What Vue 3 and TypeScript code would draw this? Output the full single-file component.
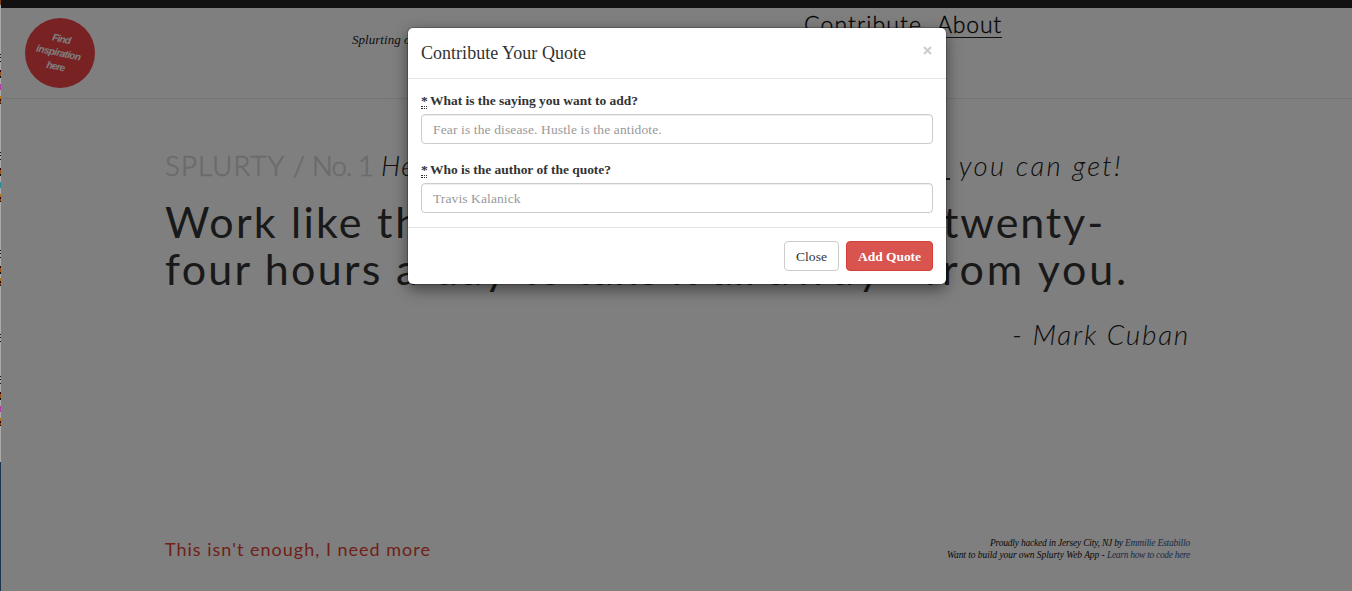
<script setup lang="ts">
import { ref } from 'vue'
import type { Directive } from 'vue'

interface Segment {
  text: string
  width: number
  linked?: boolean
}

/* Tracks a run of text out (or in) so that it spans the given width. */
const vFit: Directive<HTMLElement, number> = {
  mounted(el, { value }) {
    const natural = el.getBoundingClientRect().width
    const count = (el.textContent ?? '').length
    if (count > 0) el.style.letterSpacing = `${(value - natural) / count}px`
  },
}

const issue: Segment[] = [
  { text: 'SPLURTY ', width: 128 },
  { text: '/ ', width: 19 },
  { text: 'No. ', width: 46 },
  { text: '1 ', width: 23 },
]

const tagline: Segment[] = [
  { text: "Here's the daily dose of ", width: 300 },
  { text: 'startup advice', width: 269, linked: true },
  { text: ' you can get!', width: 173 },
]

const quoteLines: Segment[][] = [
  [
    { text: 'Work like ', width: 212 },
    { text: 'there is someone working ', width: 566 },
    { text: 'twenty-', width: 162 },
  ],
  [
    { text: 'four hours ', width: 231 },
    { text: 'a day ', width: 126 },
    { text: 'to take it all ', width: 246 },
    { text: 'away', width: 117 },
    { text: ' ', width: 39 },
    { text: 'from you.', width: 205 },
  ],
]

const fields = [
  { id: 'saying', label: 'What is the saying you want to add?', labelWidth: 208, hint: 'Fear is the disease. Hustle is the antidote.', spacing: 'hint-saying' },
  { id: 'author', label: 'Who is the author of the quote?', labelWidth: 181, hint: 'Travis Kalanick', spacing: 'hint-author' },
]
const values = ref<Record<string, string>>({ saying: '', author: '' })
</script>

<template>
  <div class="screen">
    <div class="page">
      <div class="topbar"></div>
      <header class="header">
        <div class="badge">
          <div class="badge-text">
            <div><span v-fit="20">Find</span></div>
            <div><span v-fit="46">inspiration</span></div>
            <div><span v-fit="20">here</span></div>
          </div>
        </div>
        <p class="slogan"><span v-fit="52">Splurting </span>one quote at a time</p>
        <nav class="nav">
          <a v-fit="118">Contribute</a>
          <a v-fit="65">About</a>
        </nav>
      </header>
      <main class="main">
        <p class="tagline">
          <span v-for="s in issue" :key="s.text" v-fit="s.width" class="issue">{{ s.text }}</span>
          <em v-for="s in tagline" :key="s.text" v-fit="s.width" :class="{ linked: s.linked }">{{ s.text }}</em>
        </p>
        <h1 class="quote">
          <span v-for="(line, i) in quoteLines" :key="i" class="quote-line">
            <span v-for="s in line" :key="s.text" v-fit="s.width">{{ s.text }}</span>
          </span>
        </h1>
        <p class="author"><em v-fit="178">- Mark Cuban</em></p>
      </main>
      <footer class="footer">
        <a v-fit="266" class="more">This isn't enough, I need more</a>
        <div class="credits">
          <div><span v-fit="135">Proudly hacked in Jersey City, NJ by </span><a v-fit="65">Emmilie Estabillo</a></div>
          <div><span v-fit="160">Want to build your own Splurty Web App - </span><a v-fit="83">Learn how to code here</a></div>
        </div>
      </footer>
    </div>
    <div class="backdrop"></div>
    <div class="edge"></div>
    <section class="modal" role="dialog">
      <div class="modal-header">
        <h4 v-fit="165">Contribute Your Quote</h4>
        <button class="dismiss" aria-label="Dismiss">
          <svg width="9" height="9" viewBox="0 0 9 9"><path d="M1 1L8 8M8 1L1 8" stroke="#ccc" stroke-width="2" /></svg>
        </button>
      </div>
      <div class="modal-body">
        <div v-for="f in fields" :key="f.id" class="group">
          <label :for="f.id"><abbr>*</abbr><span v-fit="f.labelWidth">{{ f.label }}</span></label>
          <input :id="f.id" v-model="values[f.id]" :class="f.spacing" :placeholder="f.hint" />
        </div>
      </div>
      <div class="modal-footer">
        <button class="btn close"><span v-fit="31">Close</span></button>
        <button class="btn add"><span v-fit="63">Add Quote</span></button>
      </div>
    </section>
  </div>
</template>

<style>
html, body { margin: 0; overflow: hidden; }
</style>

<style scoped>
* { box-sizing: border-box; }
p, h1, h4 { margin: 0; font-weight: 400; }
span, em, a, h4 { white-space: pre; }
.screen { position: relative; width: 1352px; height: 591px; overflow: hidden; font-family: "Liberation Serif", serif; color: #333; }
.page { height: 591px; background: #fff; display: flex; flex-direction: column; }
.topbar { height: 8px; background: #222; }
.header { height: 91px; border-bottom: 1px solid #e9e9e9; display: flex; align-items: flex-start; }
.badge { width: 70px; height: 70px; margin: 10px 0 0 25px; border-radius: 50%; background: #f24447; display: flex; align-items: center; justify-content: center; }
.badge-text { margin-right: 4px; transform: rotate(12deg); text-align: center; color: #fff; font: italic bold 10px/14px "Liberation Sans", sans-serif; }
.slogan { width: 450px; margin: 23px 0 0 257px; white-space: nowrap; overflow: hidden; font-size: 13px; line-height: 18px; font-style: italic; color: #222; }
.slogan span { display: inline-block; }
.nav { display: flex; gap: 15px; margin: 2px 0 0 2px; font: 300 23px/29px Lato, sans-serif; color: #000; -webkit-text-stroke: .3px #000; }
.nav a { border-bottom: 1px solid #222; height: 28px; }
.main { padding: 48px 162px 0 165px; height: 420px; font-family: Lato, sans-serif; }
.tagline { display: flex; height: 38px; font-size: 27.5px; line-height: 38px; font-weight: 300; color: #222; }
.issue { color: #d6d6d6; -webkit-text-stroke: .6px #d6d6d6; }
.linked { text-decoration: underline; }
.quote { margin-top: 13px; font-size: 43px; line-height: 47px; color: #333; }
.quote-line { display: flex; height: 47px; }
.author { margin-top: 23px; display: flex; justify-content: flex-end; font-size: 28px; line-height: 38px; font-weight: 300; color: #222; }
.footer { display: flex; justify-content: space-between; align-items: flex-start; padding: 17px 162px 0 165px; }
.more { font: 400 18px/26px Lato, sans-serif; color: #e23e31; }
.credits { margin-top: 1px; font-size: 9.5px; line-height: 12px; font-style: italic; color: #111; }
.credits div { display: flex; justify-content: flex-end; }
.credits a { color: #36558f; }
.backdrop { position: absolute; inset: 0; background: rgba(0, 0, 0, .5); }
.edge {
  position: absolute; left: 0; top: 0; width: 1px; height: 591px;
  background:
    linear-gradient(#80400f, #80400f) 0 0 / 1px 5px no-repeat,
    linear-gradient(#111 1px, #aaa 1px 3px, #111 3px 4px, #aaa 4px 7px, #111 7px) 0 54px / 1px 8px no-repeat,
    linear-gradient(#300 2px, #9a5215 2px 6px, #111 6px) 0 70px / 1px 8px no-repeat,
    linear-gradient(#b33cae, #b33cae) 0 84px / 1px 6px no-repeat,
    linear-gradient(#b27412 3px, #300 3px 5px, #8b4311 5px 7px, #111 7px) 0 96px / 1px 8px no-repeat,
    linear-gradient(#111 1px, #aaa 1px 3px, #111 3px 4px, #aaa 4px 7px, #111 7px) 0 152px / 1px 8px no-repeat,
    linear-gradient(#300 2px, #9a5215 2px 6px, #111 6px) 0 168px / 1px 8px no-repeat,
    linear-gradient(#238b99, #238b99) 0 182px / 1px 6px no-repeat,
    linear-gradient(#b27412 3px, #300 3px 5px, #8b4311 5px 7px, #111 7px) 0 194px / 1px 8px no-repeat,
    linear-gradient(#111 1px, #aaa 1px 3px, #111 3px 4px, #aaa 4px 7px, #111 7px) 0 250px / 1px 8px no-repeat,
    linear-gradient(#300 2px, #9a5215 2px 6px, #111 6px) 0 266px / 1px 8px no-repeat,
    linear-gradient(#b27412 3px, #300 3px 5px, #8b4311 5px 7px, #111 7px) 0 278px / 1px 8px no-repeat,
    linear-gradient(#111 1px, #aaa 1px 3px, #111 3px 4px, #aaa 4px 7px, #111 7px) 0 334px / 1px 8px no-repeat,
    linear-gradient(#111 1px, #aaa 1px 3px, #111 3px 4px, #aaa 4px 7px, #111 7px) 0 376px / 1px 8px no-repeat,
    linear-gradient(#300 2px, #9a5215 2px 6px, #111 6px) 0 392px / 1px 8px no-repeat,
    linear-gradient(#b33cae, #b33cae) 0 406px / 1px 6px no-repeat,
    linear-gradient(#b27412 3px, #300 3px 5px, #8b4311 5px 7px, #111 7px) 0 418px / 1px 8px no-repeat,
    linear-gradient(#1e3550, #1e3550) 0 462px / 1px 129px no-repeat,
    #aaa;
}
.modal { position: absolute; left: 408px; top: 28px; width: 538px; height: 256px; background: #fff; border-radius: 5px; box-shadow: 0 0 0 1px rgba(0, 0, 0, .2), 0 5px 15px rgba(0, 0, 0, .5); }
.modal-header { height: 51px; padding: 13px 13px 0; border-bottom: 1px solid #e5e5e5; display: flex; justify-content: space-between; align-items: flex-start; }
.modal-header h4 { font-size: 18px; line-height: 24px; color: #333; }
.dismiss { border: 0; background: none; padding: 0; margin: 5px 1px 0 0; height: 9px; display: flex; }
.modal-body { height: 148px; padding: 13px 13px 0; display: flex; flex-direction: column; gap: 17px; }
.group { display: flex; flex-direction: column; gap: 5px; }
label { display: flex; height: 17px; font-size: 13.5px; line-height: 17px; font-weight: 700; color: #333; }
abbr { width: 6px; height: 17px; margin-right: 3px; position: relative; border-bottom: 1px dotted #333; }
abbr::after { content: ""; position: absolute; left: 0; right: 0; bottom: 1px; border-bottom: 1px dotted #333; }
input { width: 512px; height: 30px; padding: 2px 11px 0; border: 1px solid #ccc; border-radius: 4px; box-shadow: inset 0 1px 1px rgba(0, 0, 0, .075); font: 13.5px "Liberation Serif", serif; color: #555; outline: 0; }
input::placeholder { color: #999; opacity: 1; }
.hint-saying { letter-spacing: .13px; }
.hint-author { letter-spacing: .1px; }
.modal-footer { height: 57px; padding: 13px 13px 0; border-top: 1px solid #e5e5e5; display: flex; justify-content: flex-end; gap: 7px; }
.btn { height: 30px; padding: 2px 0 0; border-radius: 4px; border: 1px solid #ccc; background: #fff; color: #333; font: 13.5px/26px "Liberation Serif", serif; }
.close { width: 55px; }
.add { width: 87px; background: #d9534f; border-color: #d43f3a; color: #fff; font-weight: 700; }
</style>
